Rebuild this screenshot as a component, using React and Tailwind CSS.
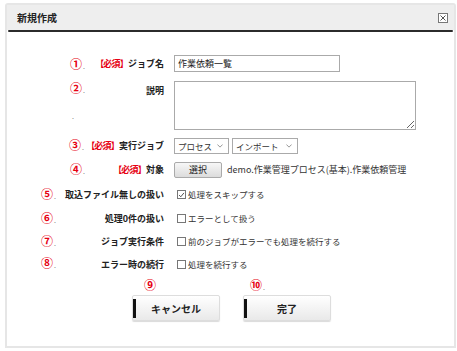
import React from 'react'

const font = { fontFamily: '"Noto Sans CJK JP", "Noto Sans", sans-serif' }

function Mark({ n, x, y, dot = true }) {
  return (
    <span className="absolute flex items-baseline leading-none" style={{ left: x, top: y }}>
      <span className="text-[12px] font-bold text-[#e60012]">{n}</span>
      {dot && <span className="text-[7px] text-[#777] ml-[1px]">.</span>}
    </span>
  )
}

function Check({ checked, label }) {
  return (
    <div className="flex items-center gap-[2px] text-[8.5px] text-[#333]">
      <span className="w-[9px] h-[9px] border border-[#777] bg-white flex items-center justify-center ml-[3px]">
        {checked && (
          <svg viewBox="0 0 10 10" className="w-[8px] h-[8px]">
            <path d="M1.5 5 L4 7.5 L8.5 2" fill="none" stroke="#333" strokeWidth="1.2" />
          </svg>
        )}
      </span>
      <span>{label}</span>
    </div>
  )
}

function Row({ label, req, h, top, children, className = '' }) {
  return (
    <div className={`flex ${top ? 'items-start' : 'items-center'} ${className}`} style={{ height: h }}>
      <div className={`w-[157px] shrink-0 text-right text-[9px] font-bold text-[#222] ${top ? 'pt-[3px]' : ''}`}>
        {req && <span className="text-[#e60012] tracking-[-0.8px]">【必須】</span>}
        {label}
      </div>
      <div className="ml-[10px] flex items-center">{children}</div>
    </div>
  )
}

function Select({ value, w }) {
  return (
    <div className={`${w} h-[16px] border border-[#aaa] bg-white flex items-center justify-between px-[3px] text-[8.5px] text-[#333]`}>
      <span>{value}</span>
      <svg viewBox="0 0 8 5" className="w-[6px] h-[4px] mr-[2px]">
        <path d="M0.5 0.5 L4 4 L7.5 0.5" fill="none" stroke="#666" strokeWidth="0.9" />
      </svg>
    </div>
  )
}

function BigButton({ children }) {
  return (
    <button className="relative w-[88px] h-[26px] border border-[#ddd] rounded-[2px] bg-gradient-to-b from-white to-[#e9e9e9] shadow-[0_1px_1px_rgba(0,0,0,0.15)] text-[10px] font-bold text-[#222]">
      <span className="absolute left-[0px] top-[3px] w-[3px] h-[19px] bg-[#111]" />
      {children}
    </button>
  )
}

export default function App() {
  return (
    <div className="relative w-[457px] h-[351px] bg-white pt-[3px] pl-[5px]" style={font}>
      <div className="w-[451px] h-[345px] border-2 border-[#e6e6e6] rounded-t-[3px] flex flex-col">
        <div className="h-[25px] bg-[#eeeeee] flex items-center justify-between pl-[10px] pr-[6px]">
          <span className="text-[10px] font-bold text-[#222]">新規作成</span>
          <svg viewBox="0 0 10 10" className="w-[10px] h-[10px]">
            <rect x="0.5" y="0.5" width="9" height="9" fill="#fff" stroke="#777" strokeWidth="1" />
            <path d="M2.5 2.5 L7.5 7.5 M7.5 2.5 L2.5 7.5" stroke="#555" strokeWidth="1" />
          </svg>
        </div>
        <div className="h-[2px] mx-[1px] bg-[#2b2b2b] rounded-full" />

        <div className="flex flex-col pt-[23px]">
          <Row label="ジョブ名" req h={17}>
            <div className="w-[166px] h-[17px] border border-[#aaa] bg-white flex items-center px-[3px] text-[9px] text-[#222]">
              作業依頼一覧
            </div>
          </Row>
          <Row label="説明" h={49} top className="mt-[9px]">
            <textarea className="w-[242px] h-[49px] border border-[#aaa] bg-white" />
          </Row>
          <Row label="実行ジョブ" req h={24} className="mt-[4px]">
            <div className="flex gap-[3px]">
              <Select value="プロセス" w="w-[55px]" />
              <Select value="インポート" w="w-[66px]" />
            </div>
          </Row>
          <Row label="対象" req h={24}>
            <button className="w-[48px] h-[16px] border border-[#aaa] rounded-[2px] bg-gradient-to-b from-[#f7f7f7] to-[#dcdcdc] text-[9px] text-[#222]">
              選択
            </button>
            <span className="ml-[5px] text-[9px] text-[#333]">demo.作業管理プロセス(基本).作業依頼管理</span>
          </Row>
          <Row label="取込ファイル無しの扱い" h={25}>
            <Check checked label="処理をスキップする" />
          </Row>
          <Row label="処理0件の扱い" h={23}>
            <Check label="エラーとして扱う" />
          </Row>
          <Row label="ジョブ実行条件" h={23}>
            <Check label="前のジョブがエラーでも処理を続行する" />
          </Row>
          <Row label="エラー時の続行" h={23}>
            <Check label="処理を続行する" />
          </Row>

          <div className="flex gap-[23px] pl-[125px] mt-[19px]">
            <BigButton>キャンセル</BigButton>
            <BigButton>完了</BigButton>
          </div>
        </div>
      </div>

      <Mark n="①" x={70} y={58} />
      <Mark n="②" x={70} y={82} />
      <span className="absolute left-[72px] top-[113px] text-[7px] text-[#777] leading-none">.</span>
      <Mark n="③" x={69} y={139} />
      <Mark n="④" x={70} y={163} />
      <Mark n="⑤" x={41} y={188} />
      <Mark n="⑥" x={41} y={212} />
      <Mark n="⑦" x={41} y={235} />
      <Mark n="⑧" x={41} y={257} />
      <Mark n="⑨" x={144} y={279} dot={false} />
      <Mark n="⑩" x={250} y={279} />
    </div>
  )
}
